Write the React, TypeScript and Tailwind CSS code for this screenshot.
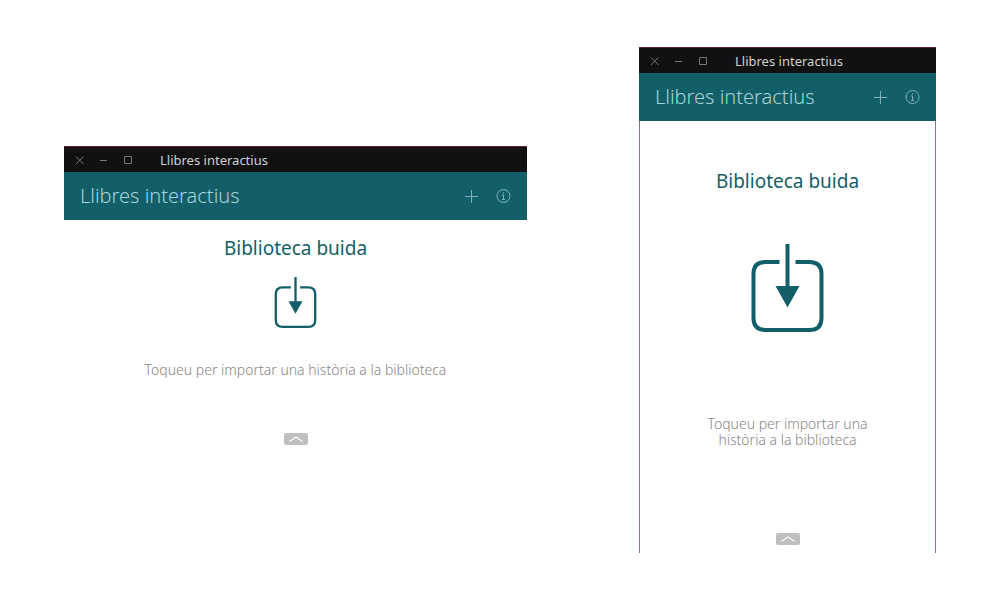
import type { ReactNode } from "react";

const TITLE = "Llibres interactius";

function ImportIcon({ className }: { className: string }) {
  return (
    <svg viewBox="0 0 73 88" fill="none" className={className} aria-hidden="true">
      <path
        d="M28.5 18H14.5Q2.5 18 2.5 30V74Q2.5 86 14.5 86H58.5Q70.5 86 70.5 74V30Q70.5 18 58.5 18H44.5"
        stroke="currentColor"
        strokeWidth="4"
      />
      <path d="M36.5 0V46" stroke="currentColor" strokeWidth="4" />
      <path d="M24.5 42H48.5L36.5 63.5Z" fill="currentColor" />
    </svg>
  );
}

function WindowControls() {
  return (
    <div className="flex gap-3 text-[#777777]">
      <button type="button" aria-label="Tanca" className="size-3">
        <svg viewBox="0 0 12 12" className="size-3" fill="none" stroke="currentColor">
          <path d="M2 2.5L9.5 10M9.5 2.5L2 10" />
        </svg>
      </button>
      <button type="button" aria-label="Minimitza" className="size-3">
        <svg viewBox="0 0 12 12" className="size-3" fill="none" stroke="currentColor">
          <path d="M2 6.5H9" />
        </svg>
      </button>
      <button type="button" aria-label="Maximitza" className="size-3">
        <svg viewBox="0 0 12 12" className="size-3" fill="none" stroke="currentColor">
          <path d="M2.5 2.5H9.5V9.5H2.5Z" />
        </svg>
      </button>
    </div>
  );
}

function AppWindow({ className = "", children }: { className?: string; children: ReactNode }) {
  return (
    <section className={`flex flex-col ${className}`}>
      <div className="flex h-[26px] items-center gap-[26px] border-t border-[#60203f] bg-[#111111] pl-[10px]">
        <WindowControls />
        <span className="text-[13px] leading-5 font-normal text-[#d0d0d0]">{TITLE}</span>
      </div>
      <header className="flex h-12 items-center justify-between bg-[#125f69] px-4 text-[#a5d3d8]">
        <h1 className="text-xl leading-6 font-light whitespace-nowrap">{TITLE}</h1>
        <div className="flex items-center gap-4 text-[#7fb1b7]">
          <button type="button" aria-label="Afegeix" className="size-4">
            <svg viewBox="0 0 16 16" className="size-4" fill="none" stroke="currentColor">
              <path d="M8.5 2V15M2 8.5H15" />
            </svg>
          </button>
          <button type="button" aria-label="Informació" className="size-4">
            <svg viewBox="0 0 16 16" className="size-4" fill="none" stroke="currentColor">
              <circle cx="8.5" cy="8" r="6.5" />
              <path d="M8.5 7V11.5M7 7H8.5M7 11.5H10M8.5 4.2V5.6" />
            </svg>
          </button>
        </div>
      </header>
      {children}
    </section>
  );
}

function BottomHandle() {
  return (
    <button
      type="button"
      aria-label="Mostra el menú inferior"
      className="flex h-3 w-6 items-center justify-center rounded-xs bg-[#bfbfbf] text-white"
    >
      <svg viewBox="0 0 16 8" className="h-2 w-4" fill="none" stroke="currentColor" strokeWidth="1.2">
        <path d="M1.5 6.5L8 2L14.5 6.5" />
      </svg>
    </button>
  );
}

export default function App() {
  return (
    <main className="grid min-h-screen grid-cols-[463fr_297fr] items-start gap-28 bg-white px-16 pt-[47px] font-['Noto_Sans','Open_Sans',sans-serif]">
      <AppWindow className="mt-[99px]">
        <div className="flex flex-col items-center pt-4 text-[#125f69]">
          <h2 className="text-[19px] leading-6 font-normal">Biblioteca buida</h2>
          <button type="button" aria-label="Importa una història" className="mt-[17px]">
            <ImportIcon className="h-[51px] w-[43px]" />
          </button>
          <p className="mt-[34px] mb-[55px] text-center text-sm leading-4 font-light text-[#858585]">
            Toqueu per importar una història a la biblioteca
          </p>
          <BottomHandle />
        </div>
      </AppWindow>
      <AppWindow>
        <div className="flex flex-col items-center border-x border-[#9d6d90] pt-12 pb-2 text-[#125f69]">
          <h2 className="text-[19px] leading-6 font-normal">Biblioteca buida</h2>
          <button type="button" aria-label="Importa una història" className="mt-[51px]">
            <ImportIcon className="h-[88px] w-[73px]" />
          </button>
          <p className="mt-[84px] mb-[85px] max-w-44 text-center text-sm leading-4 font-light text-[#858585]">
            Toqueu per importar una història a la biblioteca
          </p>
          <BottomHandle />
        </div>
      </AppWindow>
    </main>
  );
}
